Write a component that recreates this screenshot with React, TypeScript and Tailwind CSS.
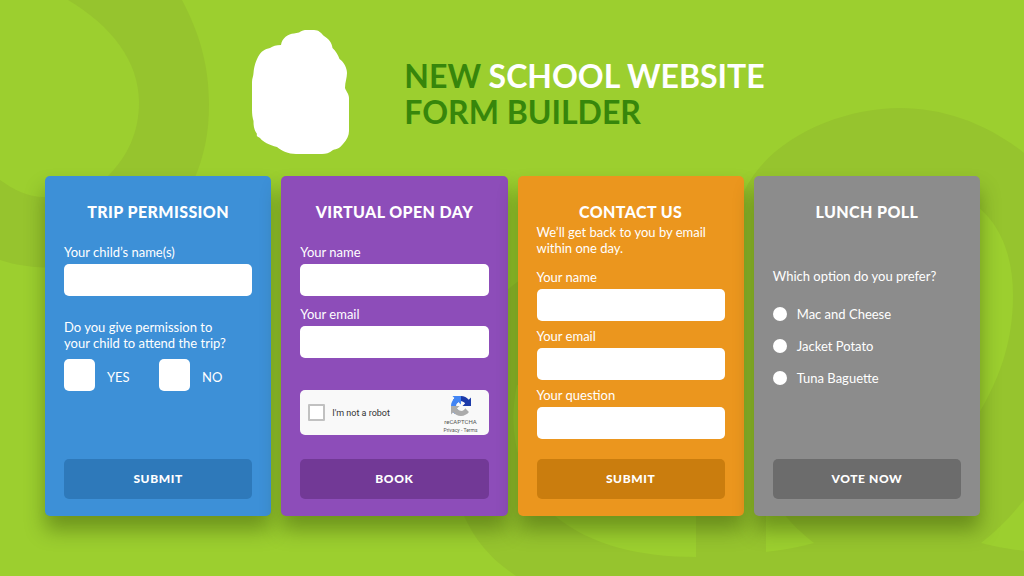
import type { ReactNode } from "react";

function Backdrop() {
  return (
    <svg
      aria-hidden="true"
      className="absolute inset-0 h-full w-full"
      viewBox="0 0 1024 576"
      preserveAspectRatio="xMidYMid slice"
    >
      <g fill="#96c42e">
        <path d="M68 0H182C201 36 209 68 209 104C209 134 204 156 194 180C174 228 130 262 74 267C46 269 20 267 0 260V180C14 190 28 197 44 197C72 196 96 188 108 176C128 156 139 132 139 102C139 62 112 26 68 0Z" />
        <path
          fillRule="evenodd"
          d="M516 576C492 560 476 542 464 516C440 450 446 330 520 280C600 230 720 250 736 220C744 150 830 108 900 108C944 108 988 124 1024 153V500C1012 515 998 530 981 543C996 547 1010 549 1024 551V576ZM555 516C590 545 640 557 696 557V400L517 385C505 440 525 490 555 516ZM766 500V552C784 550 800 547 814 543C800 532 790 522 784 514ZM960 196C996 212 1013 250 1013 295C1013 345 998 382 975 420H900V196Z"
        />
      </g>
    </svg>
  );
}

function Mark() {
  return (
    <svg aria-hidden="true" className="h-[124px] w-[97px] shrink-0" viewBox="0 0 97 124" fill="#fff">
      <path d="M47 2.500C50 .5 52 0 55 0H62C67 0 69 3 72 6C77 9 80 13 80.500 18C84 21 86 25 87.500 29C92 32 95 38 95 43C95 48 93 52 93 58C94 61 97 64 97 68V101C97 105 95 110 91 114C88 118 85 119 81 120C77 123 74 124 70 124H44C36 124 30 121 25 117C17 115 11 112 8 108C6 107 4 106 5 104C2 100 1.500 96 1.500 91C.5 88 0 84 0 80V52C0 48 1.500 46 1.500 43C2 36 4 31 6 27C9 21 13 19 18 18C21 16 24 15 29 15C30 8 36 4 42 3.500Z" />
    </svg>
  );
}

function Card({
  title,
  action,
  color,
  buttonColor,
  children,
}: {
  title: string;
  action: string;
  color: string;
  buttonColor: string;
  children: ReactNode;
}) {
  return (
    <form
      onSubmit={(event) => event.preventDefault()}
      className={`flex min-h-[340px] flex-col rounded-[5px] px-[19px] pt-6 pb-[17px] text-[13px] leading-4 text-white shadow-[0_14px_20px_rgba(40,60,0,0.4)] ${color}`}
    >
      <h2 className="text-center text-base leading-6 font-black tracking-wide">{title}</h2>
      {children}
      <button
        type="submit"
        className={`mt-auto h-10 w-full rounded-[5px] text-xs font-black tracking-wider ${buttonColor}`}
      >
        {action}
      </button>
    </form>
  );
}

function Field({ id, label, type = "text" }: { id: string; label: string; type?: string }) {
  return (
    <div className="flex flex-col gap-1">
      <label htmlFor={id}>{label}</label>
      <input id={id} type={type} className="h-8 w-full rounded-[5px] bg-white px-2 text-gray-800" />
    </div>
  );
}

function Tick({ id, label }: { id: string; label: string }) {
  return (
    <div className="flex w-[95px] items-center gap-3">
      <input id={id} type="checkbox" className="h-8 w-[31px] appearance-none rounded-[5px] bg-white checked:bg-sky-200" />
      <label htmlFor={id} className="pt-1">
        {label}
      </label>
    </div>
  );
}

function Choice({ id, label }: { id: string; label: string }) {
  return (
    <div className="flex items-center gap-[10px]">
      <input
        id={id}
        type="radio"
        name="lunch"
        className="size-[14px] appearance-none rounded-full bg-white checked:border-4 checked:border-white checked:bg-gray-700"
      />
      <label htmlFor={id}>{label}</label>
    </div>
  );
}

function RecaptchaLogo() {
  return (
    <svg aria-hidden="true" className="size-5" viewBox="0 0 64 64">
      <path
        fill="#1c3aa9"
        d="M64 31.955l-.033-1.37V4.687l-7.16 7.16C50.948 4.674 42.033.093 32.05.093c-10.4 0-19.622 4.96-25.458 12.64l11.736 11.86a15.55 15.55 0 0 1 4.754-5.334c2.05-1.6 4.952-2.906 8.968-2.906.485 0 .86.057 1.135.163 4.976.393 9.288 3.14 11.828 7.124l-8.307 8.307L64 31.953"
      />
      <path
        fill="#4285f4"
        d="M31.862.094l-1.37.033H4.594l7.16 7.16C4.58 13.147 0 22.06 0 32.046c0 10.4 4.96 19.622 12.64 25.458L24.5 45.768a15.55 15.55 0 0 1-5.334-4.754c-1.6-2.05-2.906-4.952-2.906-8.968 0-.485.057-.86.163-1.135.393-4.976 3.14-9.288 7.124-11.828l8.307 8.307L31.86.095"
      />
      <path
        fill="#ababab"
        d="M.001 32.045l.033 1.37v25.898l7.16-7.16c5.86 7.173 14.774 11.754 24.76 11.754 10.4 0 19.622-4.96 25.458-12.64l-11.736-11.86a15.55 15.55 0 0 1-4.754 5.334c-2.05 1.6-4.952 2.906-8.968 2.906-.485 0-.86-.057-1.135-.163-4.976-.393-9.288-3.14-11.828-7.124l8.307-8.307c-10.522.04-22.4.066-27.295-.005"
      />
    </svg>
  );
}

function Recaptcha() {
  return (
    <div className="flex h-[45px] items-center rounded-[5px] bg-[#f9f9f9] pr-[6px] pl-2 font-[Roboto,sans-serif] text-[#333]">
      <input id="robot" type="checkbox" className="size-[17px] appearance-none rounded-[1px] border-2 border-[#c1c1c1] bg-white checked:bg-green-500" />
      <label htmlFor="robot" className="ml-[7px] text-[9px]">
        I'm not a robot
      </label>
      <div className="ml-auto flex w-[44px] flex-col items-center pt-1 text-[#555]">
        <RecaptchaLogo />
        <span className="mt-[2px] text-[6px] leading-[8px]">reCAPTCHA</span>
        <span className="text-[5px] leading-[8px] whitespace-nowrap">
          <a href="#privacy">Privacy</a> - <a href="#terms">Terms</a>
        </span>
      </div>
    </div>
  );
}

export default function App() {
  return (
    <div className="relative min-h-screen overflow-hidden bg-[#9ccf2f] font-[Lato,'Open_Sans',sans-serif]">
      <Backdrop />
      <div className="relative pt-[30px] pr-11 pb-[60px] pl-[45px]">
        <header className="flex items-center justify-center gap-[55px] pr-2">
          <Mark />
          <h1 className="pt-1 text-[32px] leading-9 font-bold text-[#37860b]">
            NEW <span className="text-white">SCHOOL WEBSITE</span>
            <br />
            FORM BUILDER
          </h1>
        </header>

        <main className="mt-[22px] grid grid-cols-4 gap-[10px]">
          <Card title="TRIP PERMISSION" action="SUBMIT" color="bg-[#3d90d7]" buttonColor="bg-[#2e79ba]">
            <div className="mt-5">
              <Field id="child" label="Your child’s name(s)" />
            </div>
            <fieldset className="mt-[23px]">
              <legend>
                Do you give permission to
                <br />
                your child to attend the trip?
              </legend>
              <div className="mt-2 flex">
                <Tick id="yes" label="YES" />
                <Tick id="no" label="NO" />
              </div>
            </fieldset>
          </Card>

          <Card title="VIRTUAL OPEN DAY" action="BOOK" color="bg-[#8d4db9]" buttonColor="bg-[#723996]">
            <div className="mt-5 mb-8 flex flex-col gap-[10px]">
              <Field id="visitor-name" label="Your name" />
              <Field id="visitor-email" label="Your email" type="email" />
            </div>
            <Recaptcha />
          </Card>

          <Card title="CONTACT US" action="SUBMIT" color="bg-[#eb961e]" buttonColor="bg-[#ca7d0e]">
            <p>
              We’ll get back to you by email
              <br />
              within one day.
            </p>
            <div className="mt-[13px] flex flex-col gap-[7px]">
              <Field id="contact-name" label="Your name" />
              <Field id="contact-email" label="Your email" type="email" />
              <Field id="contact-question" label="Your question" />
            </div>
          </Card>

          <Card title="LUNCH POLL" action="VOTE NOW" color="bg-[#8c8c8c]" buttonColor="bg-[#6c6c6c]">
            <fieldset className="mt-11">
              <legend>Which option do you prefer?</legend>
              <div className="mt-[22px] flex flex-col gap-4">
                <Choice id="mac" label="Mac and Cheese" />
                <Choice id="potato" label="Jacket Potato" />
                <Choice id="tuna" label="Tuna Baguette" />
              </div>
            </fieldset>
          </Card>
        </main>
      </div>
    </div>
  );
}
